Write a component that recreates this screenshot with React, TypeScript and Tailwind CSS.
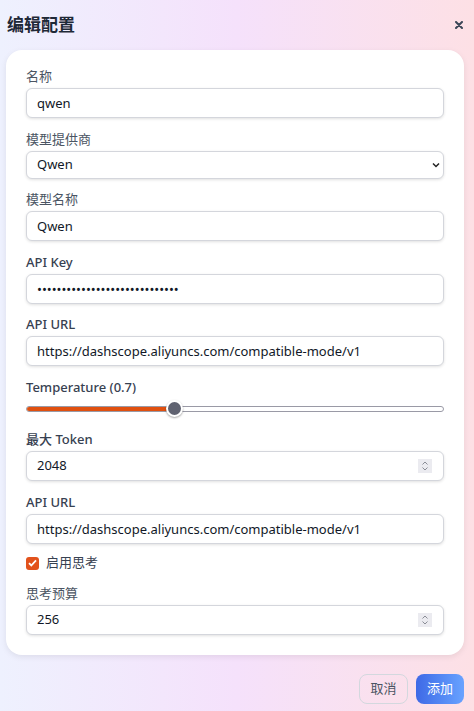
import type { ReactNode } from "react";

const FONT = { fontFamily: '"Noto Sans", "Noto Sans CJK SC", sans-serif' };

function Label({ children, strong }: { children: ReactNode; strong?: boolean }) {
  return (
    <div
      className={`text-[13px] leading-[20px] mb-[2px] ${strong ? "font-medium text-[#374151]" : "text-[#4b5563]"}`}
    >
      {children}
    </div>
  );
}

function TextBox({ value, password }: { value: string; password?: boolean }) {
  return (
    <input
      readOnly
      type={password ? "password" : "text"}
      value={value}
      className="w-full h-[30px] rounded-md border border-[#d4d6dc] bg-white px-[10px] text-[13px] text-[#111827] shadow-[0_1px_3px_rgba(0,0,0,0.12)] outline-none"
    />
  );
}

function NumberBox({ value }: { value: string }) {
  return (
    <div className="w-full h-[30px] rounded-md border border-[#d4d6dc] bg-white pl-[10px] pr-[11px] flex items-center shadow-[0_1px_3px_rgba(0,0,0,0.12)]">
      <span className="flex-1 text-[13px] text-[#111827]">{value}</span>
      <span className="w-[14px] h-[14px] bg-[#ebebf0] flex items-center justify-center">
        <svg width="8" height="12" viewBox="0 0 8 12" fill="none" stroke="#8a8d96" strokeWidth="1">
          <path d="M1.5 4.5 4 2l2.5 2.5M1.5 7.5 4 10l2.5-2.5" />
        </svg>
      </span>
    </div>
  );
}

export default function App() {
  return (
    <div
      style={FONT}
      className="w-[474px] h-[711px] overflow-hidden bg-gradient-to-r from-[#eef1fe] via-[#f5e1fb] to-[#fde0e5] flex flex-col"
    >
      <div className="h-[50px] flex items-center justify-between pl-[7px] pr-[11px]">
        <h2 className="text-[17px] font-bold text-[#1f2937]">编辑配置</h2>
        <svg width="8" height="8" viewBox="0 0 8 8" stroke="#3b4657" strokeWidth="2" strokeLinecap="round">
          <path d="M1 1l6 6M7 1 1 7" />
        </svg>
      </div>

      <div className="ml-[6px] mr-[10px] bg-white rounded-2xl shadow-[0_2px_6px_rgba(0,0,0,0.08)] px-5 pt-4 pb-5 flex flex-col gap-[10.5px]">
        <div>
          <Label>名称</Label>
          <TextBox value="qwen" />
        </div>
        <div>
          <Label>模型提供商</Label>
          <div className="relative">
            <select className="w-full h-[28px] appearance-none rounded-md border border-[#d4d6dc] bg-white px-[10px] text-[13px] text-[#111827] shadow-[0_1px_3px_rgba(0,0,0,0.12)] outline-none">
              <option>Qwen</option>
            </select>
            <svg className="absolute right-[4px] top-[11px]" width="8" height="6" viewBox="0 0 8 6" fill="none" stroke="#222" strokeWidth="1.5">
              <path d="M1 1.5 4 4.5 7 1.5" />
            </svg>
          </div>
        </div>
        <div>
          <Label>模型名称</Label>
          <TextBox value="Qwen" />
        </div>
        <div>
          <Label strong>API Key</Label>
          <TextBox password value={"x".repeat(29)} />
        </div>
        <div>
          <Label strong>API URL</Label>
          <TextBox value="https://dashscope.aliyuncs.com/compatible-mode/v1" />
        </div>
        <div>
          <Label strong>Temperature (0.7)</Label>
          <div className="relative h-[20px] flex items-center">
            <div className="w-full h-[6px] rounded-full border border-[#9a9aa6] bg-white overflow-hidden flex">
              <div className="w-[36%] h-full bg-[#e0500f]" />
            </div>
            <div className="absolute left-[140px] top-[1.5px] w-[17px] h-[17px] rounded-full bg-[#5f6270] border-2 border-white shadow-[0_1px_2px_rgba(0,0,0,0.35)]" />
          </div>
        </div>
        <div>
          <Label strong>最大 Token</Label>
          <NumberBox value="2048" />
        </div>
        <div>
          <Label strong>API URL</Label>
          <TextBox value="https://dashscope.aliyuncs.com/compatible-mode/v1" />
        </div>
        <div className="h-[18px] flex items-center gap-[7px]">
          <span className="w-[13px] h-[13px] rounded-[3px] bg-[#e2521c] flex items-center justify-center">
            <svg width="9" height="8" viewBox="0 0 9 8" fill="none" stroke="white" strokeWidth="1.8">
              <path d="M1 4.2 3.3 6.5 8 1.3" />
            </svg>
          </span>
          <span className="text-[13px] text-[#374151]">启用思考</span>
        </div>
        <div>
          <Label>思考预算</Label>
          <NumberBox value="256" />
        </div>
      </div>

      <div className="mt-[19px] pr-[10px] flex justify-end gap-2">
        <button className="w-[49px] h-[30px] rounded-lg border border-[#d3d8de] text-[13px] text-[#4b5563]">
          取消
        </button>
        <button className="w-[48px] h-[30px] rounded-lg bg-gradient-to-r from-[#3f69e6] to-[#68a2ff] text-[13px] text-white">
          添加
        </button>
      </div>
    </div>
  );
}
